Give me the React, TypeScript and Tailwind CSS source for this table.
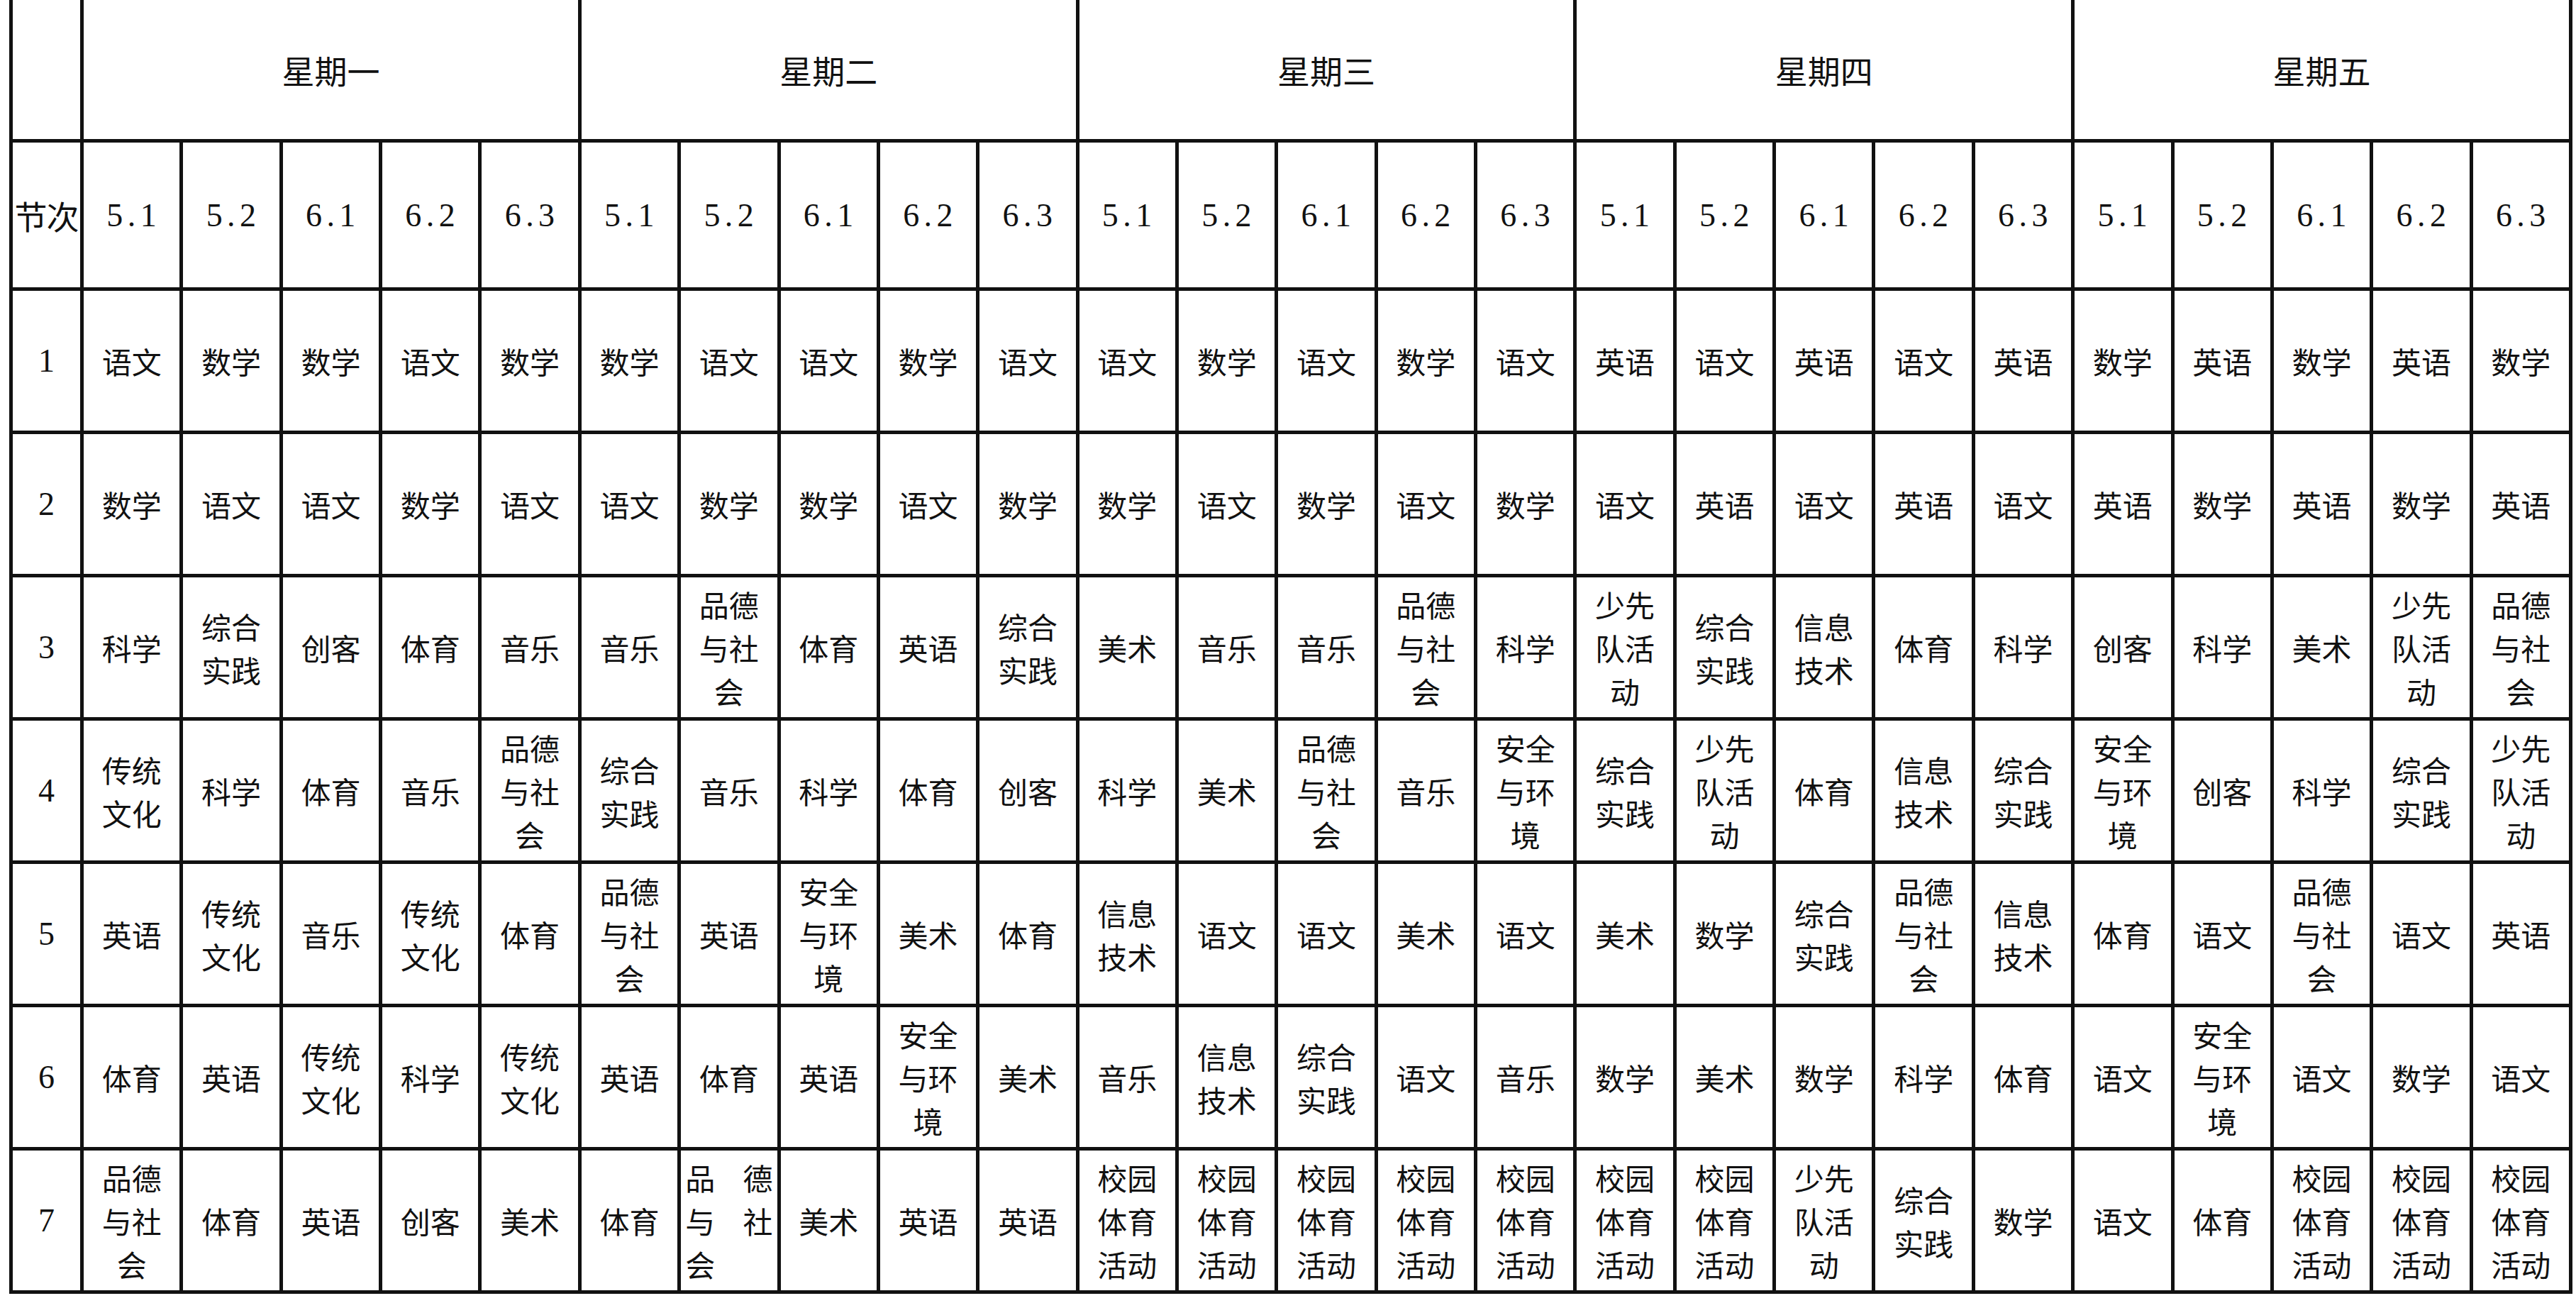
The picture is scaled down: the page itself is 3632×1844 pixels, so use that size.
const days = ["星期一", "星期二", "星期三", "星期四", "星期五"];
const classes = ["5.1", "5.2", "6.1", "6.2", "6.3"];

// one string per period, 25 entries: Mon..Fri x (5.1 5.2 6.1 6.2 6.3)
// "品德与社会!" = the spaced-out, justified variant
const periods = [
  "语文 数学 数学 语文 数学 数学 语文 语文 数学 语文 语文 数学 语文 数学 语文 英语 语文 英语 语文 英语 数学 英语 数学 英语 数学",
  "数学 语文 语文 数学 语文 语文 数学 数学 语文 数学 数学 语文 数学 语文 数学 语文 英语 语文 英语 语文 英语 数学 英语 数学 英语",
  "科学 综合实践 创客 体育 音乐 音乐 品德与社会 体育 英语 综合实践 美术 音乐 音乐 品德与社会 科学 少先队活动 综合实践 信息技术 体育 科学 创客 科学 美术 少先队活动 品德与社会",
  "传统文化 科学 体育 音乐 品德与社会 综合实践 音乐 科学 体育 创客 科学 美术 品德与社会 音乐 安全与环境 综合实践 少先队活动 体育 信息技术 综合实践 安全与环境 创客 科学 综合实践 少先队活动",
  "英语 传统文化 音乐 传统文化 体育 品德与社会 英语 安全与环境 美术 体育 信息技术 语文 语文 美术 语文 美术 数学 综合实践 品德与社会 信息技术 体育 语文 品德与社会 语文 英语",
  "体育 英语 传统文化 科学 传统文化 英语 体育 英语 安全与环境 美术 音乐 信息技术 综合实践 语文 音乐 数学 美术 数学 科学 体育 语文 安全与环境 语文 数学 语文",
  "品德与社会 体育 英语 创客 美术 体育 品德与社会! 美术 英语 英语 校园体育活动 校园体育活动 校园体育活动 校园体育活动 校园体育活动 校园体育活动 校园体育活动 少先队活动 综合实践 数学 语文 体育 校园体育活动 校园体育活动 校园体育活动",
].map((row) => row.split(" "));

const cell = "flex items-center justify-center border-r-[5px] border-b-[5px] border-[#111]";

function Subject({ text }: { text: string }) {
  if (text.endsWith("!")) {
    const lines = text.slice(0, -1).match(/.{1,2}/g) ?? [];
    return (
      <div className="flex w-full flex-col px-[6px] leading-[61px]">
        {lines.map((l, i) =>
          l.length === 2 ? (
            <div key={i} className="flex justify-between">
              <span>{l[0]}</span>
              <span>{l[1]}</span>
            </div>
          ) : (
            <div key={i}>{l}</div>
          )
        )}
      </div>
    );
  }
  const lines = text.match(/.{1,2}/g) ?? [];
  return (
    <div className="flex flex-col items-center leading-[61px]">
      {lines.map((l, i) => (
        <span key={i}>{l}</span>
      ))}
    </div>
  );
}

export default function App() {
  return (
    <div className="min-h-screen bg-white text-[#111] font-['Noto_Sans_CJK_SC',sans-serif]">
      <div className="ml-[13px] grid w-[3614px] grid-cols-[100px_repeat(25,minmax(0,1fr))] grid-rows-[201px_209px_repeat(7,202px)] border-l-[5px] border-[#111]">
        <div className={cell} />
        {days.map((d) => (
          <div key={d} className={`${cell} col-span-5 text-[46px]`}>
            {d}
          </div>
        ))}

        <div className={`${cell} text-[46px] tracking-[-0.02em]`}>节次</div>
        {days.map((d) =>
          classes.map((c) => (
            <div
              key={d + c}
              className={`${cell} font-['Liberation_Serif',serif] text-[46px] tracking-[0.14em] pl-[6px]`}
            >
              {c}
            </div>
          ))
        )}

        {periods.map((row, p) => (
          <div key={p} className="contents">
            <div className={`${cell} font-['Liberation_Serif',serif] text-[46px]`}>{p + 1}</div>
            {row.map((s, i) => (
              <div key={i} className={`${cell} text-[42px]`}>
                <Subject text={s} />
              </div>
            ))}
          </div>
        ))}
      </div>
    </div>
  );
}
